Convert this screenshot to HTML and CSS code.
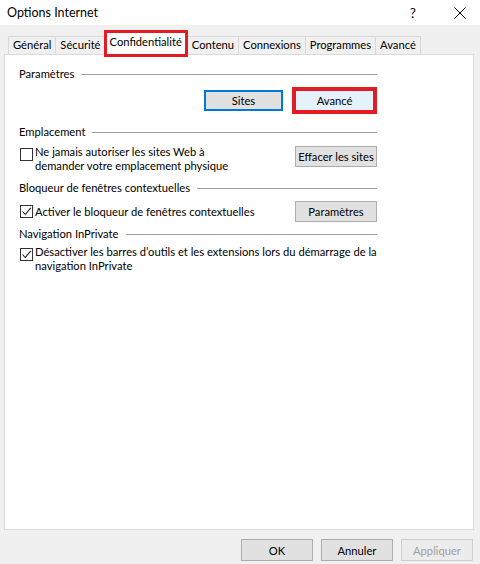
FILE: index.html
```html
<!DOCTYPE html>
<html lang="fr">
<head>
<meta charset="utf-8">
<title>Options Internet</title>
<link rel="stylesheet" href="styles.css">
</head>
<body>
<div class="window">
  <div class="titlebar">
    <span class="title">Options Internet</span>
    <span class="help">?</span>
    <span class="close">
      <svg width="12" height="12" viewBox="0 0 12 12"><path d="M0.5 0.5 L11.5 11.5 M11.5 0.5 L0.5 11.5" stroke="#000" stroke-width="1" fill="none"/></svg>
    </span>
  </div>
  <div class="tabs">
    <div class="tab">Général</div>
    <div class="tab">Sécurité</div>
    <div class="tab selected">Confidentialité</div>
    <div class="tab">Contenu</div>
    <div class="tab">Connexions</div>
    <div class="tab">Programmes</div>
    <div class="tab">Avancé</div>
  </div>
  <div class="panel">
    <div class="group g1">
      <div class="ghead"><span>Paramètres</span><i class="rule"></i></div>
      <div class="btnrow">
        <button class="btn focus">Sites</button>
        <span class="mark"><button class="btn hover">Avancé</button></span>
      </div>
    </div>
    <div class="group g2">
      <div class="ghead"><span>Emplacement</span><i class="rule"></i></div>
      <div class="optrow">
        <label class="opt"><span class="cb"></span><span class="otext">Ne jamais autoriser les sites Web à<br>demander votre emplacement physique</span></label>
        <button class="btn side">Effacer les sites</button>
      </div>
    </div>
    <div class="group g3">
      <div class="ghead"><span>Bloqueur de fenêtres contextuelles</span><i class="rule"></i></div>
      <div class="optrow center">
        <label class="opt"><span class="cb"><svg width="11" height="11" viewBox="0 0 11 11"><path d="M1.5 5.5 L4.2 8.5 L9.8 1.8" stroke="#222" stroke-width="1.1" fill="none"/></svg></span><span class="otext">Activer le bloqueur de fenêtres contextuelles</span></label>
        <button class="btn side">Paramètres</button>
      </div>
    </div>
    <div class="group g4">
      <div class="ghead"><span>Navigation InPrivate</span><i class="rule"></i></div>
      <div class="optrow last">
        <label class="opt"><span class="cb"><svg width="11" height="11" viewBox="0 0 11 11"><path d="M1.5 5.5 L4.2 8.5 L9.8 1.8" stroke="#222" stroke-width="1.1" fill="none"/></svg></span><span class="otext">Désactiver les barres d’outils et les extensions lors du démarrage de la<br>navigation InPrivate</span></label>
      </div>
    </div>
  </div>
  <div class="footer">
    <button class="btn fbtn">OK</button>
    <button class="btn fbtn">Annuler</button>
    <button class="btn fbtn disabled">Appliquer</button>
  </div>
</div>
</body>
</html>
```

FILE: styles.css
```css
* { box-sizing: border-box; }
html, body { margin: 0; padding: 0; }
body {
  width: 480px;
  height: 564px;
  background: #f0f0f0;
  font-family: Lato, "Liberation Sans", sans-serif;
  font-size: 11.2px;
  color: #000;
  overflow: hidden;
}
.window { width: 480px; height: 564px; display: flex; flex-direction: column; }
.titlebar {
  height: 25px;
  background: #fff;
  display: flex;
  align-items: center;
  padding-left: 7px;
}
.title { font-size: 12.5px; flex: 1; }
.help { width: 54px; text-align: center; font-size: 13px; }
.close { width: 40px; display: flex; justify-content: center; align-items: center; }
.tabs {
  display: flex;
  align-items: flex-end;
  padding-left: 6px;
  margin-top: 9px;
  height: 20px;
}
.tab {
  height: 18px;
  line-height: 16px;
  padding: 0 4px;
  border: 1px solid #d9d9d9;
  border-bottom: none;
  margin-left: -1px;
  background: #f0f0f0;
  white-space: nowrap;
}
.tab:first-child { margin-left: 2px; }
.tab.selected {
  height: 21px;
  line-height: 17px;
  background: #fff;
  outline: 3px solid #e31b23;
  position: relative;
  z-index: 2;
  margin: 0 3px 0 1px;
  border: none;
  padding: 0 3px;
}
.panel {
  margin: 0 6px 0 4px;
  height: 476px;
  background: #fff;
  border: 1px solid #d9d9d9;
  padding: 0 96px 0 14px;
}
.ghead {
  display: flex;
  align-items: center;
  height: 15px;
  line-height: 15px;
  white-space: nowrap;
}
.rule { flex: 1; height: 1px; background: #a0a0a0; margin-left: 7px; margin-top: 1px; }
.g1 { padding-top: 11px; }
.g2 { padding-top: 10px; }
.g3 { padding-top: 7px; }
.g4 { padding-top: 4px; }
.btnrow {
  display: flex;
  justify-content: flex-end;
  align-items: center;
  margin-top: 6px;
  gap: 9px;
}
.btn {
  font-family: inherit;
  font-size: 11.2px;
  height: 21px;
  padding: 0;
  border: 1px solid #adadad;
  background: #e1e1e1;
  color: #000;
  line-height: 17px;
  white-space: nowrap;
}
.btn.focus { width: 79px; border: 2px solid #0078d7; }
.mark { border: 4px solid #e31b23; display: flex; }
.btn.hover { width: 77px; background: #e5f1fb; border-color: #e5f1fb; height: 19px; }
.optrow {
  display: flex;
  justify-content: space-between;
  align-items: flex-start;
  margin-top: 6px;
}
.optrow.center { align-items: center; margin-top: 6px; }
.optrow.last { margin-top: 4px; }
.opt { display: flex; align-items: flex-start; white-space: nowrap; }
.cb {
  width: 13px; height: 13px;
  border: 1px solid #333;
  background: #fff;
  margin-left: 1px;
  margin-top: 3px;
  display: flex; align-items: center; justify-content: center;
  flex: none;
}
.center .cb { margin-top: 0; }
.otext { line-height: 14px; margin-left: 2px; }
.btn.side { width: 82px; margin-top: 1px; flex: none; }
.center .btn.side { margin-top: 0; }
.footer {
  display: flex;
  justify-content: flex-end;
  gap: 8px;
  padding-right: 7px;
  margin-top: 9px;
}
.fbtn { width: 72px; height: 22px; }
.fbtn.disabled { color: #a0a0a0; background: #ececec; border-color: #cfcfcf; }
```
